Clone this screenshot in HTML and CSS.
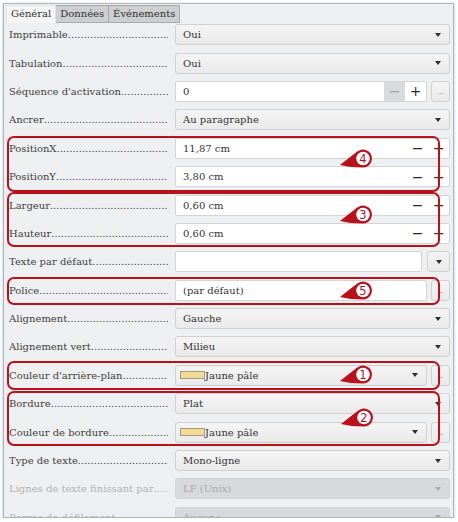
FILE: index.html
```html
<!DOCTYPE html>
<html lang="fr">
<head>
<meta charset="utf-8">
<title>Propriétés</title>
<link rel="stylesheet" href="styles.css">
</head>
<body>
<div class="window">
  <div class="tabs">
    <div class="tab active">Général</div>
    <div class="tab">Données</div>
    <div class="tab">Événements</div>
  </div>
  <div class="rows">
    <div class="row">
      <div class="label"><span>Imprimable</span><span class="dots"></span></div>
      <div class="select"><span>Oui</span><i class="arrow"></i></div>
    </div>
    <div class="row">
      <div class="label"><span>Tabulation</span><span class="dots"></span></div>
      <div class="select"><span>Oui</span><i class="arrow"></i></div>
    </div>
    <div class="row">
      <div class="label"><span>Séquence d'activation</span><span class="dots"></span></div>
      <div class="pair">
        <div class="field spin"><span class="val">0</span><span class="sb off">−</span><span class="sb">+</span></div>
        <div class="ell">...</div>
      </div>
    </div>
    <div class="row">
      <div class="label"><span>Ancrer</span><span class="dots"></span></div>
      <div class="select"><span>Au paragraphe</span><i class="arrow"></i></div>
    </div>
    <div class="row">
      <div class="label"><span>PositionX</span><span class="dots"></span></div>
      <div class="field spin"><span class="val">11,87 cm</span><span class="sb">−</span><span class="sb">+</span></div>
    </div>
    <div class="row">
      <div class="label"><span>PositionY</span><span class="dots"></span></div>
      <div class="field spin"><span class="val">3,80 cm</span><span class="sb">−</span><span class="sb">+</span></div>
    </div>
    <div class="row">
      <div class="label"><span>Largeur</span><span class="dots"></span></div>
      <div class="field spin"><span class="val">0,60 cm</span><span class="sb">−</span><span class="sb">+</span></div>
    </div>
    <div class="row">
      <div class="label"><span>Hauteur</span><span class="dots"></span></div>
      <div class="field spin"><span class="val">0,60 cm</span><span class="sb">−</span><span class="sb">+</span></div>
    </div>
    <div class="row">
      <div class="label"><span>Texte par défaut</span><span class="dots"></span></div>
      <div class="pair wide">
        <div class="field"></div>
        <div class="dropbtn"><i class="arrow"></i></div>
      </div>
    </div>
    <div class="row">
      <div class="label"><span>Police</span><span class="dots"></span></div>
      <div class="pair">
        <div class="field"><span class="val">(par défaut)</span></div>
        <div class="ell">...</div>
      </div>
    </div>
    <div class="row">
      <div class="label"><span>Alignement</span><span class="dots"></span></div>
      <div class="select"><span>Gauche</span><i class="arrow"></i></div>
    </div>
    <div class="row">
      <div class="label"><span>Alignement vert</span><span class="dots"></span></div>
      <div class="select"><span>Milieu</span><i class="arrow"></i></div>
    </div>
    <div class="row">
      <div class="label"><span>Couleur d'arrière-plan</span><span class="dots"></span></div>
      <div class="pair">
        <div class="select color"><span class="swatch"></span><span class="cname">Jaune pâle</span><i class="arrow"></i></div>
        <div class="ell">...</div>
      </div>
    </div>
    <div class="row">
      <div class="label"><span>Bordure</span><span class="dots"></span></div>
      <div class="select"><span>Plat</span><i class="arrow"></i></div>
    </div>
    <div class="row">
      <div class="label"><span>Couleur de bordure</span><span class="dots"></span></div>
      <div class="pair">
        <div class="select color"><span class="swatch"></span><span class="cname">Jaune pâle</span><i class="arrow"></i></div>
        <div class="ell">...</div>
      </div>
    </div>
    <div class="row">
      <div class="label"><span>Type de texte</span><span class="dots"></span></div>
      <div class="select"><span>Mono-ligne</span><i class="arrow"></i></div>
    </div>
    <div class="row">
      <div class="label disabled"><span>Lignes de texte finissant par</span><span class="dots"></span></div>
      <div class="select disabled"><span>LF (Unix)</span><i class="arrow"></i></div>
    </div>
    <div class="row">
      <div class="label disabled"><span>Barres de défilement</span><span class="dots"></span></div>
      <div class="select disabled"><span>Aucune</span><i class="arrow"></i></div>
    </div>

    <div class="ann a4"></div>
    <div class="ann a3"></div>
    <div class="ann a5"></div>
    <div class="ann a1"></div>
    <div class="ann a2"></div>

    <svg class="mark m4" width="34" height="20" viewBox="0 0 34 20"><path class="mk" d="M0,16 Q9,9 16.6,3.1 A9,9 0 1,1 23,18.5 Q10,18.5 0,16 Z"/><circle cx="23" cy="9.5" r="6.8" fill="#fff"/><text x="23" y="13.6" class="mt">4</text></svg>
    <svg class="mark m3" width="34" height="20" viewBox="0 0 34 20"><path class="mk" d="M0,16 Q9,9 16.6,3.1 A9,9 0 1,1 23,18.5 Q10,18.5 0,16 Z"/><circle cx="23" cy="9.5" r="6.8" fill="#fff"/><text x="23" y="13.6" class="mt">3</text></svg>
    <svg class="mark m5" width="34" height="20" viewBox="0 0 34 20"><path class="mk" d="M0,16 Q9,9 16.6,3.1 A9,9 0 1,1 23,18.5 Q10,18.5 0,16 Z"/><circle cx="23" cy="9.5" r="6.8" fill="#fff"/><text x="23" y="13.6" class="mt">5</text></svg>
    <svg class="mark m1" width="34" height="20" viewBox="0 0 34 20"><path class="mk" d="M0,16 Q9,9 16.6,3.1 A9,9 0 1,1 23,18.5 Q10,18.5 0,16 Z"/><circle cx="23" cy="9.5" r="6.8" fill="#fff"/><text x="23" y="13.6" class="mt">1</text></svg>
    <svg class="mark m2" width="34" height="20" viewBox="0 0 34 20"><path class="mk" d="M0,16 Q9,9 16.6,3.1 A9,9 0 1,1 23,18.5 Q10,18.5 0,16 Z"/><circle cx="23" cy="9.5" r="6.8" fill="#fff"/><text x="23" y="13.6" class="mt">2</text></svg>
  </div>
</div>
</body>
</html>
```

FILE: styles.css
```css
body {
  margin: 0;
  background: #ffffff;
  font-family: "DejaVu Serif", serif;
}

.window {
  margin: 3px 0 0 3px;
  width: 451px;
  height: 515px;
  box-sizing: border-box;
  border: 1px solid #a6b6c8;
  background: #eeeff0;
  overflow: hidden;
  box-shadow: 0 1px 3px rgba(70, 90, 120, 0.35);
}

.tabs {
  display: flex;
  height: 18px;
  padding: 1px 0 0 2px;
  box-sizing: border-box;
  position: relative;
  z-index: 1;
}

.tab {
  height: 18px;
  box-sizing: border-box;
  padding: 0 4px;
  font-size: 10px;
  line-height: 16px;
  color: #333;
  background: #cdcecf;
  border: 1px solid #a9aaab;
  border-left: none;
}

.tab.active {
  background: #f4f4f4;
  border: 1px solid #e2e2e2;
  border-bottom: none;
}

.rows {
  position: relative;
  margin-top: -1.5px;
}

.row {
  display: grid;
  grid-template-columns: 159px 275px;
  column-gap: 7px;
  height: 28.4px;
  align-items: center;
  padding: 0 3px 0 5px;
}

.label {
  display: flex;
  min-width: 0;
  font-size: 10px;
  color: #3e3e3e;
  white-space: nowrap;
  overflow: hidden;
}

.label.disabled {
  color: #b3b3b3;
}

.dots {
  flex: 1;
  min-width: 0;
  overflow: hidden;
}

.dots::after {
  content: "....................................................................................................";
}

.select,
.field,
.ell,
.dropbtn {
  height: 21px;
  box-sizing: border-box;
}

.select {
  display: flex;
  align-items: center;
  justify-content: space-between;
  padding: 0 8px 0 7px;
  background: linear-gradient(#f4f4f4, #eaeaea);
  border: 1px solid #d0d0d0;
  border-radius: 3px;
  font-size: 10px;
  color: #333;
}

.select.disabled {
  background: #d8d9da;
  border-color: #d2d3d4;
  color: #a9a9a9;
}

.arrow {
  width: 0;
  height: 0;
  border-left: 3.5px solid transparent;
  border-right: 3.5px solid transparent;
  border-top: 4px solid #2e2e2e;
}

.select.disabled .arrow {
  border-top-color: #a9a9a9;
}

.pair {
  display: flex;
  gap: 4px;
}

.pair > :first-child {
  flex: 1;
  min-width: 0;
}

.pair.wide {
  gap: 5px;
}

.field {
  display: flex;
  align-items: center;
  padding-left: 7px;
  background: #ffffff;
  border: 1px solid #d4d4d4;
  border-radius: 2px;
  font-size: 10px;
  color: #333;
}

.val {
  flex: 1;
}

.sb {
  width: 21px;
  height: 100%;
  display: flex;
  align-items: center;
  justify-content: center;
  font-family: "DejaVu Sans", sans-serif;
  font-size: 14px;
  color: #2a2a2a;
}

.sb.off {
  background: #d9dadb;
  color: #a2a2a2;
}

.ell {
  width: 19px;
  flex: none;
  display: flex;
  align-items: center;
  justify-content: center;
  padding-top: 2px;
  background: linear-gradient(#f4f4f4, #eaeaea);
  border: 1px solid #d0d0d0;
  border-radius: 3px;
  font-family: "DejaVu Sans", sans-serif;
  font-size: 7px;
  color: #7a7a7a;
}

.dropbtn {
  width: 23px;
  flex: none;
  display: flex;
  align-items: center;
  justify-content: center;
  background: linear-gradient(#f4f4f4, #eaeaea);
  border: 1px solid #d0d0d0;
  border-radius: 3px;
}

.select.color {
  padding-left: 4px;
  justify-content: flex-start;
}

.swatch {
  width: 25px;
  height: 8px;
  box-sizing: border-box;
  background: #f2da97;
  border: 1px solid #a59a80;
}

.cname {
  flex: 1;
}

.ann {
  position: absolute;
  left: 3px;
  width: 433px;
  box-sizing: border-box;
  border: 2px solid #b8111b;
  border-radius: 7px;
}

.a4 { top: 115.5px; height: 56px; }
.a3 { top: 171.5px; height: 55px; }
.a5 { top: 256.5px; height: 28px; }
.a1 { top: 340.5px; height: 29px; }
.a2 { top: 370.5px; height: 55px; }

.mark {
  position: absolute;
}

.mk {
  fill: #b8111b;
}

.mt {
  font-family: "DejaVu Sans", sans-serif;
  font-size: 11.5px;
  fill: #b8111b;
  text-anchor: middle;
}

.m4 { left: 336px; top: 128.5px; }
.m3 { left: 336px; top: 184.5px; }
.m5 { left: 336px; top: 260.5px; }
.m1 { left: 336px; top: 344.5px; }
.m2 { left: 337px; top: 387.5px; }
```
